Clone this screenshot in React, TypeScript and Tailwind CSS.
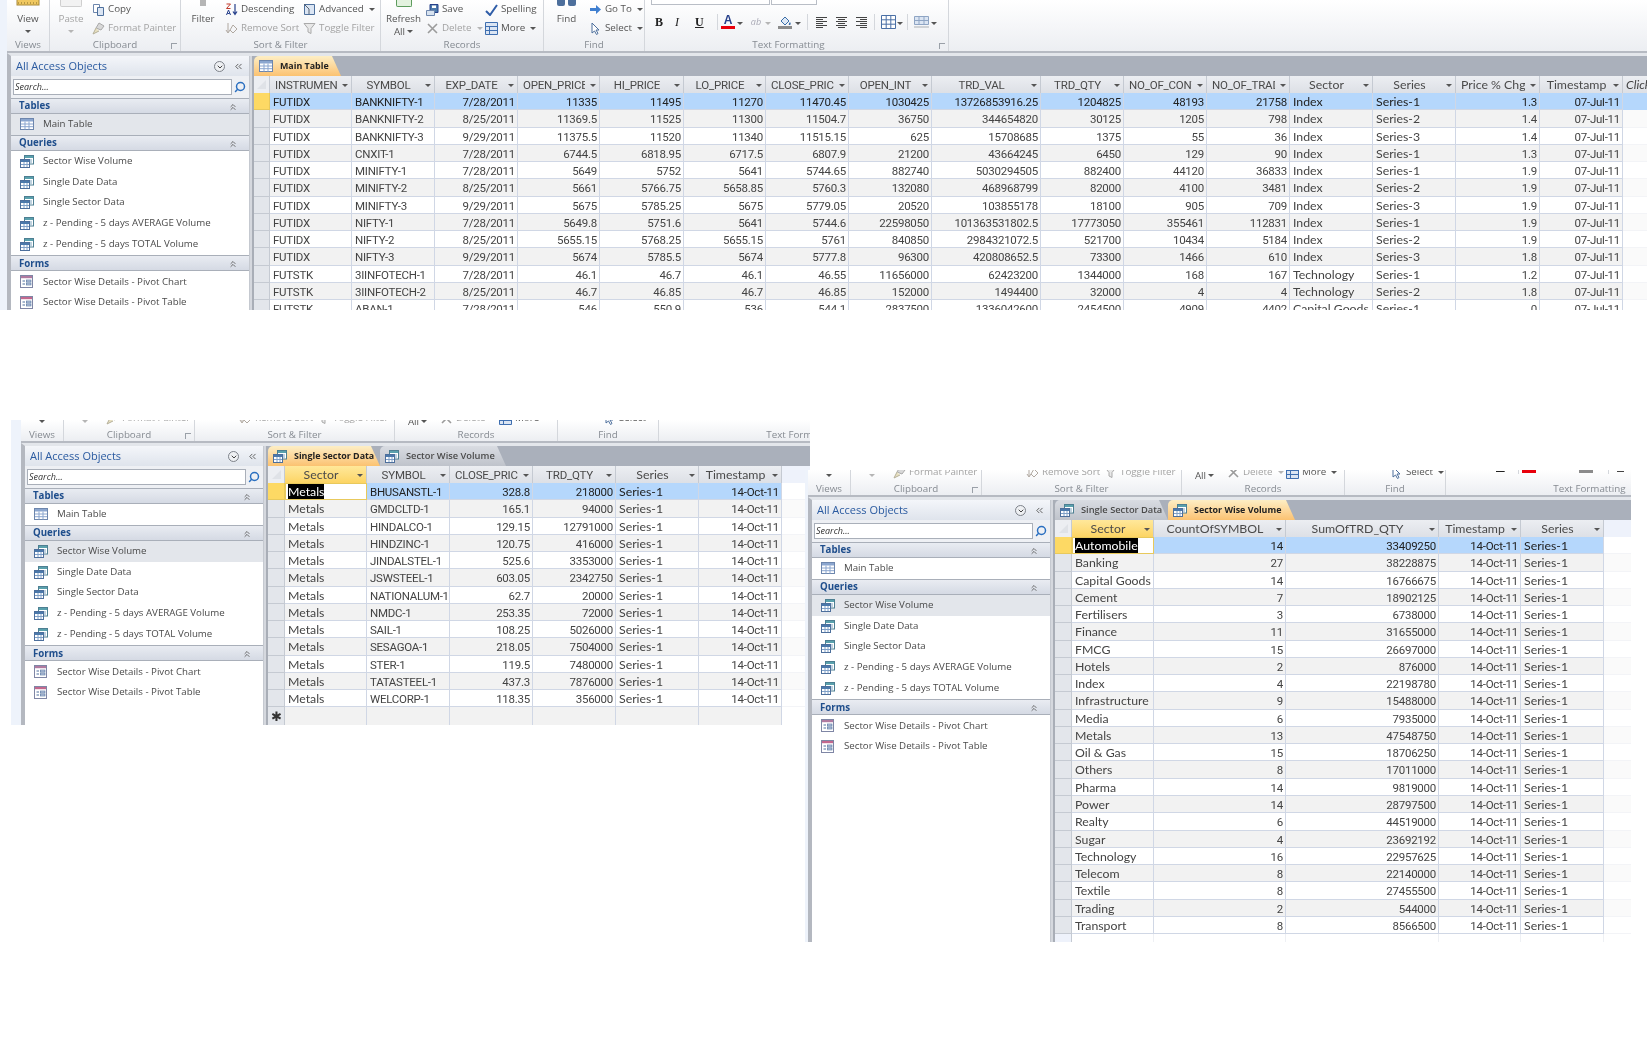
import type { ReactNode } from "react";
import { ChevronDown, ChevronsLeft, ChevronsUp, Search } from "lucide-react";

type Tab = { label: string; icon: ReactNode; active?: boolean; width: string };

function TableIcon() {
  return (
    <svg width="14" height="12" viewBox="0 0 14 12" className="shrink-0">
      <rect x="0.5" y="0.5" width="13" height="11" fill="#fff" stroke="#6d86ad" />
      <rect x="1" y="1" width="12" height="2.5" fill="#8ba6cf" />
      <path d="M1 6h12M1 8.7h12M5 3.5v8M9 3.5v8" stroke="#8ba6cf" />
    </svg>
  );
}

function QueryIcon() {
  return (
    <svg width="14" height="13" viewBox="0 0 14 13" className="shrink-0">
      <rect x="4.5" y="0.5" width="9" height="8.5" fill="#fff" stroke="#4d7f92" />
      <rect x="5" y="1" width="8" height="2" fill="#5aa1ad" />
      <path d="M7 5h5M7 7h5" stroke="#7fa5c0" />
      <rect x="0.5" y="4.5" width="9" height="8" fill="#fff" stroke="#4d6f9c" />
      <rect x="1" y="5" width="8" height="2" fill="#4b79ab" />
      <path d="M1 9.5h8M4 7v5M7 7v5" stroke="#7fa0c8" />
    </svg>
  );
}

function FormIcon({ tone = "#c2688e" }: { tone?: string }) {
  return (
    <svg width="13" height="13" viewBox="0 0 13 13" className="shrink-0">
      <rect x="0.5" y="0.5" width="12" height="12" fill="#fff" stroke="#7f86a5" />
      <rect x="1" y="1" width="11" height="2.2" fill={tone} />
      <path d="M2.5 6h2.5M2.5 9h2.5" stroke="#4d6f9c" />
      <rect x="6.5" y="5" width="4.5" height="2" fill="#b9c7de" stroke="#4d6f9c" strokeWidth="0.6" />
      <rect x="6.5" y="8" width="4.5" height="2" fill="#b9c7de" stroke="#4d6f9c" strokeWidth="0.6" />
    </svg>
  );
}

function Caret({ dim }: { dim?: boolean }) {
  return (
    <span
      className={
        dim
          ? "inline-block border-x-[3px] border-t-[3px] border-x-transparent border-t-[#b5b5b5]"
          : "inline-block border-x-[3px] border-t-[3px] border-x-transparent border-t-[#555]"
      }
    />
  );
}

function SmallBtn({ icon, label, dim, caret }: { icon: ReactNode; label: string; dim?: boolean; caret?: boolean }) {
  return (
    <div className={dim ? "flex h-[19px] items-center gap-[3px] text-[#a3a3a3]" : "flex h-[19px] items-center gap-[3px] text-[#555]"}>
      <span className="flex w-[13px] shrink-0 justify-center">{icon}</span>
      <span className="whitespace-nowrap">{label}</span>
      {caret && <span className="ml-[2px] flex items-center"><Caret dim={dim} /></span>}
    </div>
  );
}

function BigBtn({ width, label, second, dim, caret, top }: { width: string; label: string; second?: string; dim?: boolean; caret?: boolean; top?: ReactNode }) {
  return (
    <div className={width + (dim ? " flex shrink-0 flex-col items-center text-[#a3a3a3]" : " flex shrink-0 flex-col items-center text-[#555]")}>
      <div className="flex h-[12px] items-start justify-center">{top}</div>
      <div className="leading-[13px]">{label}</div>
      <div className="flex h-[13px] items-center gap-[2px] leading-[13px]">
        {second}
        {caret && <Caret dim={dim} />}
      </div>
    </div>
  );
}

function Group({ width, label, children, launcher, labelPad }: { width: string; label: string; children?: ReactNode; launcher?: boolean; labelPad?: string }) {
  return (
    <div className={width + " relative flex h-[51px] shrink-0 flex-col border-r border-[#d4d7dc]"}>
      <div className="flex h-[38px] shrink-0 overflow-hidden">{children}</div>
      <div className={"h-[13px] text-center leading-[13px] text-[#868b92] " + (labelPad ?? "")}>{label}</div>
      {launcher && <span className="absolute bottom-[2px] right-[3px] h-[6px] w-[6px] border-l border-t border-[#9aa0a8]" />}
    </div>
  );
}

function AlignIcon({ kind }: { kind: "l" | "c" | "r" }) {
  const short = kind === "l" ? "M1 3.5h7M1 7.5h7M1 11.5h7" : kind === "c" ? "M3 3.5h7M3 7.5h7M3 11.5h7" : "M5 3.5h7M5 7.5h7M5 11.5h7";
  return (
    <svg width="13" height="13" viewBox="0 0 13 13">
      <path d={"M1 1.5h11M1 5.5h11M1 9.5h11"} stroke="#444" />
      <path d={short} stroke="#444" />
    </svg>
  );
}

function TextFormatting() {
  return (
    <div className="relative flex w-full flex-col">
      <div className="ml-[6px] flex h-[6px] gap-px">
        <div className="h-[5px] w-[119px] border-x border-b border-[#b9bec6] bg-white" />
        <div className="h-[5px] w-[46px] border-x border-b border-[#b9bec6] bg-white" />
      </div>
      <div className="mt-[8px] flex h-[16px] items-center pl-[10px]">
        <span className="w-[20px] font-['Liberation_Serif',serif] text-[12px] font-bold text-[#222]">B</span>
        <span className="w-[20px] font-['Liberation_Serif',serif] text-[12px] italic text-[#222]">I</span>
        <span className="w-[22px] font-['Liberation_Serif',serif] text-[12px] font-bold text-[#222] underline">U</span>
        <span className="mr-[2px] h-[16px] w-px bg-[#d4d7dc]" />
        <span className="flex w-[16px] flex-col items-center">
          <span className="font-['Liberation_Sans',sans-serif] text-[12px] font-bold leading-[11px] text-[#27408b]">A</span>
          <span className="h-[3px] w-[14px] bg-[#e8000b]" />
        </span>
        <span className="ml-[1px] w-[10px]"><Caret /></span>
        <span className="w-[18px] text-center text-[9px] italic text-[#a9a9b5]">ab</span>
        <span className="w-[12px]"><Caret dim /></span>
        <span className="flex w-[16px] flex-col items-center">
          <svg width="13" height="10" viewBox="0 0 13 10">
            <path d="M2 5l4-4 4 4-4 4z" fill="#dfe9f6" stroke="#3a6ea8" />
            <path d="M11 6c1 1.5 1 3-.5 3S10 7 11 6z" fill="#3a6ea8" />
          </svg>
          <span className="h-[3px] w-[14px] bg-[#8b8b8b]" />
        </span>
        <span className="ml-[2px] w-[12px]"><Caret /></span>
        <span className="mr-[7px] h-[16px] w-px bg-[#d4d7dc]" />
        <span className="w-[20px]"><AlignIcon kind="l" /></span>
        <span className="w-[20px]"><AlignIcon kind="c" /></span>
        <span className="w-[19px]"><AlignIcon kind="r" /></span>
        <span className="mr-[6px] h-[16px] w-px bg-[#d4d7dc]" />
        <svg width="15" height="14" viewBox="0 0 15 14">
          <path d="M.5.5h14v13H.5zM.5 4.8h14M.5 9.2h14M5.2.5v13M9.8.5v13" fill="#fff" stroke="#4a6fa5" />
        </svg>
        <span className="ml-[1px] w-[10px]"><Caret /></span>
        <span className="mr-[6px] h-[16px] w-px bg-[#d4d7dc]" />
        <svg width="15" height="12" viewBox="0 0 15 12">
          <path d="M.5.5h14v8H.5zM.5 4.5h14M5 .5v8M10 .5v8" fill="#dbe5f3" stroke="#8fa5c4" />
          <path d="M0 11h15" stroke="#cfd2d6" strokeWidth="2" />
        </svg>
        <span className="ml-[2px]"><Caret /></span>
      </div>
    </div>
  );
}

function Ribbon({ height }: { height: string }) {
  return (
    <div className={height + " flex shrink-0 items-end overflow-hidden border-b-2 border-[#b6bac2] bg-gradient-to-b from-white to-[#eceef2] font-['Open_Sans',sans-serif] text-[9.8px]"}>
      <Group width="w-[43px]" label="Views">
        <BigBtn
          width="w-[42px]"
          label="View"
          caret
          top={<svg width="24" height="6" viewBox="0 0 24 6"><rect x="1" y="-6" width="22" height="11" fill="#f0c860" stroke="#a98a38" /><path d="M2 3h20" stroke="#806a28" strokeDasharray="1 2" /></svg>}
        />
      </Group>
      <Group width="w-[131px]" label="Clipboard" launcher>
        <BigBtn width="w-[42px]" label="Paste" dim caret top={<div className="h-[7px] w-[22px] rounded-b-[2px] border border-t-0 border-[#cfcfcf] bg-[#f2f2f2]" />} />
        <div>
          <SmallBtn label="Copy" icon={<svg width="13" height="13" viewBox="0 0 13 13"><path d="M1.5 1.5h6v8h-6z" fill="#fff" stroke="#6d86ad" /><path d="M5.5 4.5h6v8h-6z" fill="#dbe5f3" stroke="#4d6f9c" /></svg>} />
          <SmallBtn label="Format Painter" dim icon={<svg width="13" height="13" viewBox="0 0 13 13"><path d="M7 1l5 3-3 4-5-2z" fill="#d8d8d8" stroke="#a9a9a9" /><path d="M4 6l-3 6 6-3" fill="#e8e0c0" stroke="#b5b09a" /></svg>} />
        </div>
      </Group>
      <Group width="w-[200px]" label="Sort & Filter">
        <BigBtn width="w-[44px]" label="Filter" top={<div className="h-[6px] w-[6px] bg-[#b5b5b5]" />} />
        <div className="w-[78px]">
          <SmallBtn label="Descending" icon={<svg width="13" height="13" viewBox="0 0 13 13"><path d="M10 1v10M8 8.5l2 3 2-3" fill="none" stroke="#27408b" strokeWidth="1.2" /><path d="M1.5 1h4l-4 4.5h4" fill="none" stroke="#c0392b" /><path d="M1.5 12l2-5 2 5M2.3 10.5h2.4" fill="none" stroke="#27408b" /></svg>} />
          <SmallBtn label="Remove Sort" dim icon={<svg width="13" height="13" viewBox="0 0 13 13"><path d="M3 1v9M1 8l2 3 2-3M8 3l4 4-4 4-3-3z" fill="none" stroke="#b0a8a0" /></svg>} />
        </div>
        <div>
          <SmallBtn label="Advanced" caret icon={<svg width="13" height="13" viewBox="0 0 13 13"><path d="M1.5 1.5h10v10h-10z" fill="#dbe5f3" stroke="#4d6f9c" /><path d="M1 1l5 5v5" fill="none" stroke="#56606e" /></svg>} />
          <SmallBtn label="Toggle Filter" dim icon={<svg width="13" height="13" viewBox="0 0 13 13"><path d="M1 1.5h11L8 6.5v5l-3-1.5v-3.500z" fill="#e8e8e8" stroke="#aaa" /></svg>} />
        </div>
      </Group>
      <Group width="w-[163px]" label="Records">
        <BigBtn width="w-[45px]" label="Refresh" second="All" caret top={<div className="h-[7px] w-[16px] rounded-b-[2px] border border-t-0 border-[#5d9c5d] bg-[#e3f2df]" />} />
        <div className="w-[59px]">
          <SmallBtn label="Save" icon={<svg width="13" height="13" viewBox="0 0 13 13"><path d="M4 1.500h8v8h-8z" fill="#4b79ab" stroke="#27408b" /><path d="M6 2.500h4v2.500h-4z" fill="#fff" /><path d="M.5 7.500h8v5h-8z" fill="#d8e3f0" stroke="#6d86ad" /></svg>} />
          <SmallBtn label="Delete" dim caret icon={<svg width="13" height="13" viewBox="0 0 13 13"><path d="M2 2l9 9M11 2l-9 9" stroke="#9b9b9b" strokeWidth="1.6" /></svg>} />
        </div>
        <div>
          <SmallBtn label="Spelling" icon={<svg width="13" height="13" viewBox="0 0 13 13"><path d="M1 8l4 4 7-10" fill="none" stroke="#2f5da8" strokeWidth="2" /></svg>} />
          <SmallBtn label="More" caret icon={<svg width="13" height="13" viewBox="0 0 13 13"><path d="M.5.5h12v12H.5zM.5 4.500h12M.5 8.500h12M4.500 4.500v8" fill="#dbe5f3" stroke="#3f6fb0" /></svg>} />
        </div>
      </Group>
      <Group width="w-[101px]" label="Find">
        <BigBtn width="w-[45px]" label="Find" top={<div className="flex gap-[3px]"><span className="h-[6px] w-[8px] rounded-b-[2px] bg-[#4d6f9c]" /><span className="h-[6px] w-[8px] rounded-b-[2px] bg-[#4d6f9c]" /></div>} />
        <div>
          <SmallBtn label="Go To" caret icon={<svg width="13" height="13" viewBox="0 0 13 13"><path d="M1 5h6V2l5 4.500-5 4.500V8H1z" fill="#3f7fd0" /></svg>} />
          <SmallBtn label="Select" caret icon={<svg width="13" height="13" viewBox="0 0 13 13"><path d="M3 1v10l2.500-2 2 3.500 1.500-1-2-3.500H10z" fill="#fff" stroke="#4d6f9c" /></svg>} />
        </div>
      </Group>
      <Group width="w-[304px]" label="Text Formatting" launcher labelPad="pr-[16px]">
        <TextFormatting />
      </Group>
    </div>
  );
}

function NavHeader({ label }: { label: string }) {
  return (
    <div className="flex h-[16px] shrink-0 items-center justify-between border-y border-[#a9afb9] bg-gradient-to-b from-[#e9ecf2] to-[#d5dae4] pl-[8px] pr-[11px] pt-[1px] font-bold text-[#1f4e8c]">
      <span>{label}</span>
      <ChevronsUp size={10} color="#555" />
    </div>
  );
}

function NavItem({ icon, label, selected }: { icon: ReactNode; label: string; selected?: boolean }) {
  return (
    <div className={selected ? "flex h-[20.7px] shrink-0 items-center bg-[#e3e6eb] text-[#4a4a4a]" : "flex h-[20.7px] shrink-0 items-center text-[#4a4a4a]"}>
      <span className="flex w-[32px] shrink-0 pl-[9px]">{icon}</span>
      <span className="whitespace-nowrap">{label}</span>
    </div>
  );
}

function NavPane({ selected }: { selected: string }) {
  const queries = ["Sector Wise Volume", "Single Date Data", "Single Sector Data", "z - Pending - 5 days AVERAGE Volume", "z - Pending - 5 days TOTAL Volume"];
  return (
    <div className="flex w-[238px] shrink-0 flex-col bg-white font-['Open_Sans',sans-serif] text-[9.7px]">
      <div className="flex h-[20px] shrink-0 items-center justify-between bg-gradient-to-b from-[#f4f6fa] to-[#dfe4ec] pl-[5px] pr-[5px] pt-[1px]">
        <span className="text-[11px] text-[#2a5aa0]">All Access Objects</span>
        <span className="flex items-center gap-[8px]">
          <span className="flex h-[11px] w-[11px] items-center justify-center rounded-full border border-[#7d828a] bg-[#eef0f3]">
            <ChevronDown size={8} color="#444" strokeWidth={3} />
          </span>
          <ChevronsLeft size={11} color="#555" />
        </span>
      </div>
      <div className="flex h-[22px] shrink-0 items-center gap-[2px] bg-[#eef0f4] pl-[2px] pr-[3px]">
        <div className="flex h-[16px] flex-1 items-center border border-[#a9afb9] bg-white pl-[1px] text-[9px] italic text-[#333]">Search...</div>
        <Search size={12} color="#2a6fc0" strokeWidth={3} className="-scale-x-100" />
      </div>
      <NavHeader label="Tables" />
      <div className={selected === "Main Table" ? "h-[21px] shrink-0 bg-[#e3e6eb]" : "h-[21px] shrink-0"}>
        <NavItem icon={<TableIcon />} label="Main Table" />
      </div>
      <NavHeader label="Queries" />
      {queries.map((q) => (
        <NavItem key={q} icon={<QueryIcon />} label={q} selected={selected === q} />
      ))}
      <div className="h-[1px] shrink-0" />
      <NavHeader label="Forms" />
      <NavItem icon={<FormIcon tone="#b07aa0" />} label="Sector Wise Details - Pivot Chart" />
      <NavItem icon={<FormIcon />} label="Sector Wise Details - Pivot Table" />
    </div>
  );
}

function Tabs({ tabs }: { tabs: Tab[] }) {
  return (
    <div className="flex h-[20px] shrink-0 items-end bg-[#aab0bb] font-['Open_Sans',sans-serif]">
      {tabs.map((t) => (
        <div
          key={t.label}
          className={
            t.width +
            (t.active
              ? " flex h-[20px] items-center gap-[7px] rounded-tl-[5px] bg-gradient-to-b from-[#fdeec4] to-[#fbc271] pl-[5px] text-[8.9px] font-bold text-[#222] [clip-path:polygon(0_0,calc(100%-9px)_0,100%_100%,0_100%)]"
              : " flex h-[20px] items-center gap-[7px] rounded-tl-[5px] bg-gradient-to-b from-[#d9dce2] to-[#bfc3cb] pl-[5px] text-[9.3px] font-semibold text-[#4a4a4a] [clip-path:polygon(0_0,calc(100%-9px)_0,100%_100%,0_100%)]")
          }
        >
          {t.icon}
          <span className="whitespace-nowrap">{t.label}</span>
        </div>
      ))}
    </div>
  );
}

type GridProps = {
  cols: string;
  headers: string[];
  // one letter per column: l = text, u = left aligned capitals, r = right aligned number or date
  align: string;
  rows: string[][];
  highlightAll?: boolean;
  activeFirst?: boolean;
  filler?: "new" | "blank";
  lastItalic?: boolean;
};

const cellBase = "overflow-hidden whitespace-nowrap border-r border-b border-[#d0d7e5] ";
const cellKinds: Record<string, string> = {
  l: cellBase + "pl-[3px] leading-[18px] ",
  u: cellBase + "pl-[3px] font-['Roboto',sans-serif] text-[11.5px] tracking-[-0.25px] ",
  r: cellBase + "pr-[2px] text-right font-['Roboto',sans-serif] text-[11.5px] tracking-[-0.25px] ",
};

function Grid({ cols, headers, align, rows, highlightAll, activeFirst, filler, lastItalic }: GridProps) {
  return (
    <div className="min-h-0 flex-1 overflow-hidden bg-white font-['Lato',sans-serif] text-[12.3px]">
      <div className={"grid h-[17px] " + cols}>
        <div className="flex items-center justify-center border-r border-b border-[#c5cad2] bg-[#eceef2]">
          <span className="h-0 w-0 border-b-[9px] border-l-[9px] border-b-[#dfe2e7] border-l-transparent" />
        </div>
        {headers.map((h, i) => (
          <div
            key={i}
            className={
              activeFirst && i === 0
                ? "flex items-center border-r border-[#c5cad2] bg-gradient-to-b from-[#ffe89a] to-[#fcd35f] px-[3px] text-[#4a4a4a]"
                : "flex items-center border-r border-[#c5cad2] bg-gradient-to-b from-[#eceef2] to-[#dcdfe5] px-[3px] text-[#4a4a4a]"
            }
          >
            <span className={h === h.toUpperCase() ? "min-w-0 flex-1 overflow-hidden whitespace-nowrap pl-[2px] text-center font-['Roboto',sans-serif] text-[11.5px] tracking-[-0.2px]" : "min-w-0 flex-1 overflow-hidden whitespace-nowrap pl-[2px] text-center"}>{h}</span>
            <span className="ml-[5px] flex w-[6px] shrink-0 items-center"><Caret /></span>
          </div>
        ))}
        {lastItalic ? (
          <div className="overflow-hidden whitespace-nowrap bg-gradient-to-b from-[#eceef2] to-[#dcdfe5] pl-[3px] italic leading-[17px] text-[#444]">Click to Add</div>
        ) : (
          <div className="bg-[#eef2fb]" />
        )}
      </div>
      {rows.map((r, ri) => (
        <div key={ri} className={"grid h-[17.27px] leading-[19px] " + cols}>
          <div className={ri === 0 ? "border-r border-b border-[#e8c95c] bg-[#fdd964]" : "border-r border-b border-[#c5cad2] bg-[#e3e6eb]"} />
          {r.map((c, ci) => {
            if (activeFirst && ri === 0 && ci === 0) {
              return (
                <div key={ci} className="overflow-hidden border border-[#e8c95c] bg-white pl-[2px] leading-[15px]">
                  <span className="bg-black text-white">{c}</span>
                </div>
              );
            }
            return (
              <div key={ci} className={cellKinds[align[ci]] + (ri === 0 ? "bg-[#b5d7fc] text-[#222]" : ri % 2 === 1 ? "bg-[#f2f2f2] text-[#444]" : "bg-white text-[#444]")}>
                {c}
              </div>
            );
          })}
          <div className={ri === 0 && highlightAll ? "bg-[#b5d7fc]" : ri % 2 === 1 ? "border-b border-[#f3f4f7] bg-[#fafafa]" : "border-b border-[#f3f4f7] bg-white"} />
        </div>
      ))}
      {filler && (
        <div className={"grid h-[17.27px] leading-[16px] " + cols}>
          <div className={filler === "new" ? "flex items-center justify-center border-r border-[#c5cad2] bg-[#e3e6eb] text-[13px] text-[#333]" : "border-r border-[#c5cad2] bg-[#eef2fb]"}>
            {filler === "new" ? "✱" : ""}
          </div>
          {headers.map((_, i) => (
            <div key={i} className={filler === "new" ? "border-r border-[#d0d7e5] bg-[#f2f2f2]" : "border-r border-[#eef0f4] bg-white"} />
          ))}
          <div />
        </div>
      )}
    </div>
  );
}

const mainRows = [
  ["FUTIDX", "BANKNIFTY-1", "7/28/2011", "11335", "11495", "11270", "11470.45", "1030425", "13726853916.25", "1204825", "48193", "21758", "Index", "Series-1", "1.3", "07-Jul-11"],
  ["FUTIDX", "BANKNIFTY-2", "8/25/2011", "11369.5", "11525", "11300", "11504.7", "36750", "344654820", "30125", "1205", "798", "Index", "Series-2", "1.4", "07-Jul-11"],
  ["FUTIDX", "BANKNIFTY-3", "9/29/2011", "11375.5", "11520", "11340", "11515.15", "625", "15708685", "1375", "55", "36", "Index", "Series-3", "1.4", "07-Jul-11"],
  ["FUTIDX", "CNXIT-1", "7/28/2011", "6744.5", "6818.95", "6717.5", "6807.9", "21200", "43664245", "6450", "129", "90", "Index", "Series-1", "1.3", "07-Jul-11"],
  ["FUTIDX", "MINIFTY-1", "7/28/2011", "5649", "5752", "5641", "5744.65", "882740", "5030294505", "882400", "44120", "36833", "Index", "Series-1", "1.9", "07-Jul-11"],
  ["FUTIDX", "MINIFTY-2", "8/25/2011", "5661", "5766.75", "5658.85", "5760.3", "132080", "468968799", "82000", "4100", "3481", "Index", "Series-2", "1.9", "07-Jul-11"],
  ["FUTIDX", "MINIFTY-3", "9/29/2011", "5675", "5785.25", "5675", "5779.05", "20520", "103855178", "18100", "905", "709", "Index", "Series-3", "1.9", "07-Jul-11"],
  ["FUTIDX", "NIFTY-1", "7/28/2011", "5649.8", "5751.6", "5641", "5744.6", "22598050", "101363531802.5", "17773050", "355461", "112831", "Index", "Series-1", "1.9", "07-Jul-11"],
  ["FUTIDX", "NIFTY-2", "8/25/2011", "5655.15", "5768.25", "5655.15", "5761", "840850", "2984321072.5", "521700", "10434", "5184", "Index", "Series-2", "1.9", "07-Jul-11"],
  ["FUTIDX", "NIFTY-3", "9/29/2011", "5674", "5785.5", "5674", "5777.8", "96300", "420808652.5", "73300", "1466", "610", "Index", "Series-3", "1.8", "07-Jul-11"],
  ["FUTSTK", "3IINFOTECH-1", "7/28/2011", "46.1", "46.7", "46.1", "46.55", "11656000", "62423200", "1344000", "168", "167", "Technology", "Series-1", "1.2", "07-Jul-11"],
  ["FUTSTK", "3IINFOTECH-2", "8/25/2011", "46.7", "46.85", "46.7", "46.85", "152000", "1494400", "32000", "4", "4", "Technology", "Series-2", "1.8", "07-Jul-11"],
  ["FUTSTK", "ABAN-1", "7/28/2011", "546", "550.9", "536", "544.1", "2837500", "1336042600", "2454500", "4909", "4402", "Capital Goods", "Series-1", "0", "07-Jul-11"],
];

const metalRows = [
  ["BHUSANSTL-1", "328.8", "218000"],
  ["GMDCLTD-1", "165.1", "94000"],
  ["HINDALCO-1", "129.15", "12791000"],
  ["HINDZINC-1", "120.75", "416000"],
  ["JINDALSTEL-1", "525.6", "3353000"],
  ["JSWSTEEL-1", "603.05", "2342750"],
  ["NATIONALUM-1", "62.7", "20000"],
  ["NMDC-1", "253.35", "72000"],
  ["SAIL-1", "108.25", "5026000"],
  ["SESAGOA-1", "218.05", "7504000"],
  ["STER-1", "119.5", "7480000"],
  ["TATASTEEL-1", "437.3", "7876000"],
  ["WELCORP-1", "118.35", "356000"],
].map((r) => ["Metals", ...r, "Series-1", "14-Oct-11"]);

const sectorRows = [
  ["Automobile", "14", "33409250"],
  ["Banking", "27", "38228875"],
  ["Capital Goods", "14", "16766675"],
  ["Cement", "7", "18902125"],
  ["Fertilisers", "3", "6738000"],
  ["Finance", "11", "31655000"],
  ["FMCG", "15", "26697000"],
  ["Hotels", "2", "876000"],
  ["Index", "4", "22198780"],
  ["Infrastructure", "9", "15488000"],
  ["Media", "6", "7935000"],
  ["Metals", "13", "47548750"],
  ["Oil & Gas", "15", "18706250"],
  ["Others", "8", "17011000"],
  ["Pharma", "14", "9819000"],
  ["Power", "14", "28797500"],
  ["Realty", "6", "44519000"],
  ["Sugar", "4", "23692192"],
  ["Technology", "16", "22957625"],
  ["Telecom", "8", "22140000"],
  ["Textile", "8", "27455500"],
  ["Trading", "2", "544000"],
  ["Transport", "8", "8566500"],
].map((r) => [...r, "14-Oct-11", "Series-1"]);

function AccessWindow({ className, strip, ribbon, selected, tabs, children }: { className: string; strip: string; ribbon: string; selected: string; tabs: Tab[]; children: ReactNode }) {
  return (
    <div className={"absolute flex overflow-hidden " + className}>
      <div className={strip + " shrink-0 bg-[#eef3fb]"} />
      <div className="flex min-w-0 flex-1 flex-col">
        <Ribbon height={ribbon} />
        <div className="flex min-h-0 flex-1 border-l-[4px] border-t-[3px] border-[#b4b8c0] border-t-[#e3e6eb]">
          <NavPane selected={selected} />
          <div className="w-[5px] shrink-0 border-l border-[#c5c9d0] bg-[#d5d8de] [box-shadow:inset_-2px_0_0_#a9aeb7]" />
          <div className="flex min-w-0 flex-1 flex-col">
            <Tabs tabs={tabs} />
            {children}
          </div>
        </div>
      </div>
    </div>
  );
}

export default function App() {
  return (
    <div className="relative h-[1056px] w-[1647px] overflow-hidden bg-white blur-[0.3px]">
      <AccessWindow
        className="left-0 top-0 h-[310px] w-[1647px]"
        strip="w-[7px]"
        ribbon="h-[53px]"
        selected="Main Table"
        tabs={[{ label: "Main Table", icon: <TableIcon />, active: true, width: "w-[87px]" }]}
      >
        <Grid
          cols="grid-cols-[16px_82px_83px_83px_82px_84px_82px_83px_83px_109px_83px_83px_83px_83px_83px_84px_83px_1fr]"
          headers={["INSTRUMENT", "SYMBOL", "EXP_DATE", "OPEN_PRICE", "HI_PRICE", "LO_PRICE", "CLOSE_PRICE", "OPEN_INT", "TRD_VAL", "TRD_QTY", "NO_OF_CONTRACTS", "NO_OF_TRADES", "Sector", "Series", "Price % Chg", "Timestamp"]}
          align="uurrrrrrrrrrllrr"
          rows={mainRows}
          highlightAll
          lastItalic
        />
      </AccessWindow>

      <AccessWindow
        className="left-[11px] top-[420px] h-[305px] w-[799px]"
        strip="w-[10px]"
        ribbon="h-[23px]"
        selected="Sector Wise Volume"
        tabs={[
          { label: "Single Sector Data", icon: <QueryIcon />, active: true, width: "w-[112px]" },
          { label: "Sector Wise Volume", icon: <QueryIcon />, width: "w-[126px]" },
        ]}
      >
        <Grid
          cols="grid-cols-[17px_82px_83px_83px_83px_83px_83px_1fr]"
          headers={["Sector", "SYMBOL", "CLOSE_PRICE", "TRD_QTY", "Series", "Timestamp"]}
          align="lurrlr"
          rows={metalRows}
          activeFirst
          filler="new"
        />
      </AccessWindow>

      <AccessWindow
        className="left-[805px] top-[470px] h-[472px] w-[826px]"
        strip="w-[3px]"
        ribbon="h-[27px]"
        selected="Sector Wise Volume"
        tabs={[
          { label: "Single Sector Data", icon: <QueryIcon />, width: "w-[113px]" },
          { label: "Sector Wise Volume", icon: <QueryIcon />, active: true, width: "w-[127px]" },
        ]}
      >
        <Grid
          cols="grid-cols-[17px_82px_132px_153px_82px_83px_1fr]"
          headers={["Sector", "CountOfSYMBOL", "SumOfTRD_QTY", "Timestamp", "Series"]}
          align="lrrrl"
          rows={sectorRows}
          activeFirst
          filler="blank"
        />
      </AccessWindow>
    </div>
  );
}
